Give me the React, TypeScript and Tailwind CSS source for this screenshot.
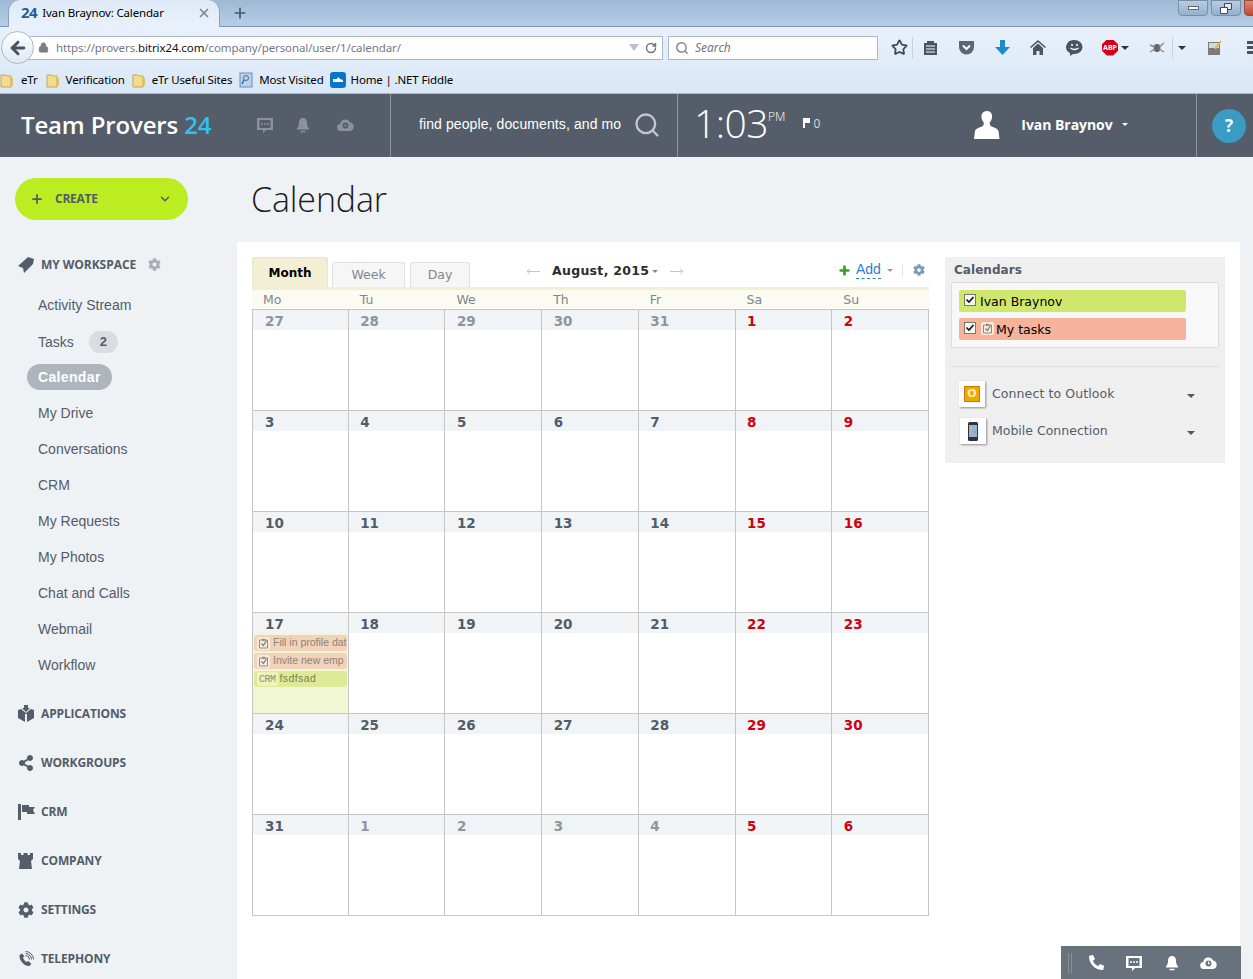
import React from 'react';
import { Search, RotateCw, Star, ArrowLeft, Lock, Plus, X, ChevronDown } from 'lucide-react';
import { FaCog, FaShareAlt, FaPhoneAlt } from 'react-icons/fa';

const sans = "font-['Liberation_Sans',Arial,sans-serif]";

const Folder = () => (
  <svg width="14" height="16" viewBox="0 0 14 16" className="shrink-0">
    <path d="M1 3h5l1 1h4v11H1z" fill="#f4dc8c" stroke="#c5a850" />
    <path d="M11 6h2v7l-2 2z" fill="#dcc070" />
  </svg>
);

const Chat = ({ c = '#8b929b', s = 18 }: { c?: string; s?: number }) => (
  <svg width={s} height={s} viewBox="0 0 18 18">
    <path d="M1 2h16v12h-7l-3 3v-3H1z" fill={c} />
    <path d="M3.500 4h11v8h-11z" fill={c === '#fff' ? '#68727d' : '#545d69'} />
    <circle cx="6" cy="8" r="1" fill={c} />
    <circle cx="9" cy="8" r="1" fill={c} />
    <circle cx="12" cy="8" r="1" fill={c} />
  </svg>
);

const BellIcon = ({ c = '#8b929b', s = 16 }: { c?: string; s?: number }) => (
  <svg width={s} height={s} viewBox="0 0 16 16">
    <path d="M8 1c-3 0-4 2.500-4 5 0 3-1 4-2 5.500v1h12v-1C13 10 12 9 12 6c0-2.500-1-5-4-5z" fill={c} />
    <rect x="5.500" y="13.800" width="5" height="1.500" fill={c} />
  </svg>
);

const Cloud = ({ c = '#8b929b', d = '#545d69', clock = false }: { c?: string; d?: string; clock?: boolean }) => (
  <svg width="17" height="13" viewBox="0 0 17 13">
    <path d="M4 13a3.500 3.500 0 0 1-.6-7A5 5 0 0 1 13 4.500 4.300 4.300 0 0 1 13 13z" fill={c} />
    <circle cx="8.500" cy="7.500" r="3" fill={d} />
    {clock ? <path d="M8.500 5.500v2.300h1.600" stroke={c} fill="none" /> : <circle cx="8.500" cy="7.500" r="1" fill={c} />}
  </svg>
);

function Browser() {
  return (
    <div className={`h-[94px] font-['Noto_Sans',sans-serif] text-black`}>
      <div className="h-[27px] flex items-start justify-between border-b border-[#7e9ab6] bg-gradient-to-b from-[#9fb9d5] to-[#b5cde6]">
        <div className="flex items-center">
          <div className="ml-2 w-[212px] h-[27px] -mb-px rounded-t-xl bg-gradient-to-b from-[#dfeaf6] to-[#e9f1fb] flex items-center pl-3 pr-2 pb-[2px] border-x border-[#8aa3bc]">
            <span className="text-[15px] font-bold text-[#215f96] tracking-[-0.5px]">24</span>
            <span className="ml-[5px] text-[11.500px] tracking-[-0.15px]">Ivan Braynov: Calendar</span>
            <X className="ml-auto w-3.5 h-3.5 text-[#7d8994]" strokeWidth={3} />
          </div>
          <Plus className="ml-[12px] w-4 h-4 text-[#4a5561]" strokeWidth={2.500} />
        </div>
        <div className="flex gap-[3px] -mr-[21px]">
          <div className="w-[30px] h-[16px] rounded-b border border-[#7a8da3] bg-gradient-to-b from-[#b9cde2] to-[#94b0cd] flex items-center justify-center">
            <div className="w-[11px] h-[4px] bg-white border border-[#5a6a7a]" />
          </div>
          <div className="w-[30px] h-[16px] rounded-b border border-[#7a8da3] bg-gradient-to-b from-[#b9cde2] to-[#94b0cd] flex items-center justify-center">
            <svg width="12" height="11" viewBox="0 0 12 11">
              <path d="M4.500 .500h7v6h-7z" fill="#dfe8f1" stroke="#3a4a5a" />
              <path d="M.500 4.500h7v6h-7z" fill="#fff" stroke="#3a4a5a" />
            </svg>
          </div>
          <div className="w-[30px] h-[16px] rounded-b border border-[#9a4a3a] bg-gradient-to-b from-[#d98a78] to-[#c0452f]" />
        </div>
      </div>
      <div className="h-[67px] bg-gradient-to-b from-[#e9f1fb] to-[#d9e7f6] border-b border-[#a9b7c4]">
        <div className="h-[41px] flex items-center relative">
          <div className="absolute left-[1px] top-[4px] w-[33px] h-[33px] rounded-full bg-gradient-to-b from-white to-[#dfe7ef] border border-[#a9b8c6] flex items-center justify-center z-10">
            <ArrowLeft className="w-5 h-5 text-[#47525d]" strokeWidth={3.500} />
          </div>
          <div className="ml-[25px] w-[638px] h-[24px] bg-white border border-[#a9b9c9] flex items-center pl-[12px] pr-[5px]">
            <Lock className="w-[11px] h-[11px] text-[#7d7d7d] fill-[#7d7d7d]" />
            <span className="ml-[7px] text-[11.500px] text-[#6f7a84] tracking-[-0.1px]">
              https://provers.<span className="text-[#111]">bitrix24.com</span>/company/personal/user/1/calendar/
            </span>
            <span className="ml-auto w-0 h-0 border-x-[5px] border-x-transparent border-t-[7px] border-t-[#b8c2cb]" />
            <RotateCw className="ml-[6px] w-[12px] h-[12px] text-[#6c7780]" strokeWidth={3} />
          </div>
          <div className="ml-[5px] w-[210px] h-[24px] bg-white border border-[#a9b9c9] flex items-center pl-[6px]">
            <Search className="w-[14px] h-[14px] text-[#7c8790]" strokeWidth={2.500} />
            <span className="ml-[6px] text-[12px] italic text-[#777]">Search</span>
          </div>
          <div className="ml-[12px] w-[18px] flex justify-center">
            <Star className="w-[17px] h-[17px] text-[#3c4a57]" strokeWidth={2.500} />
          </div>
          <div className="ml-[4px] mr-[1px] w-px h-[22px] bg-[#c5d3e0]" />
          <div className="ml-[7px] w-[18px] flex justify-center">
            <svg width="15" height="16" viewBox="0 0 15 16">
              <path d="M1 3h3V1h7v2h3v12H1z" fill="#4a5561" />
              <path d="M3 6h9M3 9h9M3 12h9" stroke="#fff" />
            </svg>
          </div>
          <div className="ml-[18px] w-[18px] flex justify-center">
            <svg width="17" height="15" viewBox="0 0 17 15">
              <path d="M1 1h15v6a7.500 7.500 0 0 1-15 0z" fill="#5a6672" />
              <path d="M5 5.500l3.500 3.500L12 5.500" stroke="#fff" strokeWidth="2" fill="none" />
            </svg>
          </div>
          <div className="ml-[18px] w-[18px] flex justify-center">
            <svg width="15" height="15" viewBox="0 0 15 15">
              <path d="M5 0h5v7h5l-7.500 8L0 7h5z" fill="#1a8ccb" />
            </svg>
          </div>
          <div className="ml-[18px] w-[18px] flex justify-center">
            <svg width="16" height="15" viewBox="0 0 16 15">
              <path d="M8 0L0 7l1 1 7-6 7 6 1-1z" fill="#4a5561" />
              <path d="M3 8l5-4.500L13 8v7H9.500v-4h-3v4H3z" fill="#4a5561" />
            </svg>
          </div>
          <div className="ml-[18px] w-[18px] flex justify-center">
            <svg width="17" height="16" viewBox="0 0 17 16">
              <path d="M8.500 0a8 7 0 0 1 0 14H7l-3 2v-3A8 7 0 0 1 8.500 0z" fill="#4a5561" />
              <circle cx="6" cy="5" r="1" fill="#fff" />
              <circle cx="11" cy="5" r="1" fill="#fff" />
              <path d="M4.500 8q4 3 8 0" stroke="#fff" strokeWidth="1.300" fill="none" />
            </svg>
          </div>
          <div className="ml-[19px] flex items-center">
            <span className="w-[16px] h-[16px] [clip-path:polygon(30%_0,70%_0,100%_30%,100%_70%,70%_100%,30%_100%,0_70%,0_30%)] bg-[#d3001a] text-white text-[7px] font-bold leading-[16px] text-center">ABP</span>
            <span className="ml-[3px] w-0 h-0 border-x-[4px] border-x-transparent border-t-[4px] border-t-[#333]" />
          </div>
          <div className="ml-[19px] w-[18px] flex justify-center">
            <svg width="16" height="14" viewBox="0 0 16 14">
              <ellipse cx="8" cy="7" rx="3.500" ry="4" fill="#666" />
              <path d="M1 4l5 2M15 2l-5 4M1 11l5-3M15 11l-5-3" stroke="#888" strokeWidth="1.400" />
            </svg>
          </div>
          <div className="ml-[6px] w-px h-[22px] bg-[#c5d3e0]" />
          <span className="ml-[5px] w-0 h-0 border-x-[4px] border-x-transparent border-t-[4px] border-t-[#333]" />
          <div className="ml-[19px] w-[18px] flex justify-center">
            <svg width="15" height="16" viewBox="0 0 15 16">
              <rect x="1" y="2" width="12" height="13" fill="#7b7b7b" />
              <rect x="2" y="3" width="10" height="5" fill="#d8d8d8" />
              <path d="M8 9l6-8" stroke="#e6b93a" strokeWidth="2" />
            </svg>
          </div>
          <div className="ml-[24px] flex flex-col gap-[2px]">
            <div className="w-[6px] h-[3px] bg-[#47525d]" />
            <div className="w-[6px] h-[3px] bg-[#47525d]" />
            <div className="w-[6px] h-[3px] bg-[#47525d]" />
          </div>
        </div>
        <div className="flex items-center h-[24px] text-[11.500px] tracking-[-0.15px]">
          <div className="flex items-center gap-[7px]"><Folder /><span>eTr</span></div>
          <div className="ml-[8px] flex items-center gap-[6px]"><Folder /><span>Verification</span></div>
          <div className="ml-[7px] flex items-center gap-[6px]"><Folder /><span>eTr Useful Sites</span></div>
          <div className="ml-[7px] flex items-center gap-[6px]">
            <svg width="14" height="16" viewBox="0 0 14 16">
              <rect x="1" y="1" width="12" height="14" fill="#bcd2ea" stroke="#6b8fb5" />
              <circle cx="7" cy="6" r="2.500" fill="none" stroke="#3a6ea5" />
              <path d="M5 8l-2 4" stroke="#3a6ea5" strokeWidth="1.500" />
            </svg>
            <span>Most Visited</span>
          </div>
          <div className="ml-[6px] flex items-center gap-[5px]">
            <span className="w-[16px] h-[16px] rounded-[3px] bg-[#0a74c9] flex items-center justify-center">
              <svg width="12" height="8" viewBox="0 0 12 8"><path d="M1 6h10V4L8 3 6 1 5 3H1z" fill="#fff" /></svg>
            </span>
            <span>Home | .NET Fiddle</span>
          </div>
        </div>
      </div>
    </div>
  );
}

function AppHeader() {
  return (
    <div className="h-[63px] bg-[#545d69] flex items-stretch text-white">
      <div className="w-[391px] flex items-center border-r border-[#8e959e] pl-[21px] pb-[2px]">
        <span className="w-[235px] font-['Open_Sans',sans-serif] font-semibold text-[24px] tracking-[-0.15px] whitespace-nowrap">
          Team Provers <span className="text-[#2fc1f0]">24</span>
        </span>
        <Chat />
        <span className="ml-[21px]"><BellIcon /></span>
        <span className="ml-[26px]"><Cloud /></span>
      </div>
      <div className="w-[287px] flex items-center border-r border-[#8e959e] pl-[28px] pb-[2px]">
        <span className={`${sans} text-[14px] tracking-[0.1px] w-[216px] overflow-hidden whitespace-nowrap`}>find people, documents, and mo</span>
        <Search className="-ml-[2px] w-[28px] h-[28px] text-[#c2c7cc]" strokeWidth={2} />
      </div>
      <div className="w-[519px] flex items-center border-r border-[#8e959e] pl-[16px] pb-[2px] font-['Open_Sans',sans-serif]">
        <span className="mb-[4px] text-[39px] font-light leading-none tracking-[-0.5px]">1:03</span>
        <span className="self-start mt-[14px] text-[12px] font-light">PM</span>
        <svg className="ml-[18px] -mt-1" width="7" height="10" viewBox="0 0 7 10"><path d="M0 0h7v5H2v5H0z" fill="#fff" /></svg>
        <span className="ml-[3px] -mt-0.5 text-[12px] text-[#d8dbdf]">0</span>
        <svg className="ml-[154px]" width="26" height="32" viewBox="0 0 26 32">
          <path d="M13 2c4 0 5.500 3 5 6.500-.3 2.500-1.500 4-2.500 5.500l1 3c3 1.500 7 2 8 5l1 8H0l1-8c1-3 5-3.500 8-5l1-3C9 12.500 7.800 11 7.500 8.500 7 5 9 2 13 2z" fill="#fff" />
        </svg>
        <span className="ml-[21px] text-[14px] font-bold tracking-[-0.05px]">Ivan Braynov</span>
        <span className="ml-[9px] w-0 h-0 border-x-[3px] border-x-transparent border-t-[3px] border-t-white" />
      </div>
      <div className="flex-1 flex items-center pl-[15px]">
        <span className="w-[34px] h-[34px] shrink-0 rounded-full bg-[#3a9cc2] flex items-center justify-center font-['Open_Sans',sans-serif] font-bold text-[17px]">?</span>
      </div>
    </div>
  );
}

const sections = [
  {
    label: 'APPLICATIONS',
    icon: (
      <svg width="16" height="17" viewBox="0 0 16 17">
        <path d="M6 0h4v3h2L8 7 4 3h2z" fill="#545d69" />
        <path d="M0 5l3-1 5 4 5-4 3 1v8l-7 4V9L8 9 7 9v8l-7-4z" fill="#545d69" />
      </svg>
    ),
  },
  { label: 'WORKGROUPS', icon: <FaShareAlt className="w-[16px] h-[16px] text-[#545d69]" /> },
  {
    label: 'CRM',
    icon: (
      <svg width="17" height="16" viewBox="0 0 17 16">
        <path d="M0 0h3v16H0z" fill="#545d69" />
        <path d="M4 1h7v2h6l-2 3 2 4H9V8H4z" fill="#545d69" />
      </svg>
    ),
  },
  {
    label: 'COMPANY',
    icon: (
      <svg width="15" height="16" viewBox="0 0 15 16">
        <path d="M0 0h3v2h2.500V0h4v2H12V0h3v6l-2 2 1 8H1l1-8-2-2z" fill="#545d69" />
      </svg>
    ),
  },
  { label: 'SETTINGS', icon: <FaCog className="w-[16px] h-[16px] text-[#545d69]" /> },
  {
    label: 'TELEPHONY',
    icon: (
      <svg width="16" height="16" viewBox="0 0 16 16">
        <path d="M4 2.500L1.500 4C.800 9 6 15.500 11.500 15l1.800-2.300-3-2.700-1.800 1C6.800 10 5.500 8.300 5 6.500l1.500-1.300z" fill="#545d69" />
        <path d="M7.500 4.500a4 4 0 0 1 4 4M7.500 2.500a6 6 0 0 1 6 6M7.500 .500a8 8 0 0 1 8 8" stroke="#545d69" fill="none" />
      </svg>
    ),
  },
];

const links = ['Activity Stream', 'Tasks', 'Calendar', 'My Drive', 'Conversations', 'CRM', 'My Requests', 'My Photos', 'Chat and Calls', 'Webmail', 'Workflow'];

function AppSidebar() {
  return (
    <div className="w-[237px] shrink-0 pt-[21px]">
      <div className="ml-[15px] w-[173px] h-[42px] rounded-[21px] bg-[#bbed21] flex items-center pl-[15px] pr-[16px] text-[#535c69]">
        <Plus className="w-[14px] h-[14px]" strokeWidth={3} />
        <span className="ml-[11px] font-['Open_Sans',sans-serif] font-bold text-[12px] tracking-[-0.25px]">CREATE</span>
        <ChevronDown className="ml-auto w-[14px] h-[14px]" strokeWidth={2.500} />
      </div>
      <div className="mt-[26px]">
        <div className="h-[37px] flex items-center pl-[18px]">
          <span className="w-[23px] shrink-0">
            <svg width="17" height="17" viewBox="0 0 17 17">
              <path d="M0 10L10 1l6 2-1 5-9 9-1-5z" fill="#545d69" />
            </svg>
          </span>
          <span className="font-['Open_Sans',sans-serif] font-bold text-[12px] text-[#535c69] tracking-[-0.05px]">MY WORKSPACE</span>
          <FaCog className="ml-[12px] w-[13px] h-[13px] text-[#a9afb6]" />
        </div>
        <div className={`${sans} text-[14px] text-[#535c69] mt-[4px]`}>
          {links.map((l) => {
            if (l === 'Calendar') {
              return (
                <div key={l} className="h-[36px] flex items-center pl-[27px]">
                  <span className="h-[26px] px-[11px] rounded-[13px] bg-[#aeb5bc] text-white font-bold flex items-center tracking-[0.35px]">{l}</span>
                </div>
              );
            }
            return (
              <div key={l} className={`h-[36px] flex items-center pl-[38px] ${l === 'Tasks' ? 'pt-[2px]' : ''}`}>
                {l}
                {l === 'Tasks' && (
                  <span className="ml-[15px] w-[29px] h-[22px] rounded-[11px] bg-[#d9dde1] font-bold text-[13px] flex items-center justify-center">2</span>
                )}
              </div>
            );
          })}
        </div>
        <div className="mt-[6px]">
          {sections.map((s) => (
            <div key={s.label} className="h-[49px] flex items-center pl-[18px]">
              <span className="w-[23px] flex justify-start shrink-0">{s.icon}</span>
              <span className="font-['Open_Sans',sans-serif] font-bold text-[12px] text-[#535c69] tracking-[-0.15px]">{s.label}</span>
            </div>
          ))}
        </div>
      </div>
    </div>
  );
}

const days = [
  27, 28, 29, 30, 31, 1, 2,
  3, 4, 5, 6, 7, 8, 9,
  10, 11, 12, 13, 14, 15, 16,
  17, 18, 19, 20, 21, 22, 23,
  24, 25, 26, 27, 28, 29, 30,
  31, 1, 2, 3, 4, 5, 6,
];

const TaskIcon = () => (
  <span className="w-[13px] h-[13px] bg-[#f7e9dc] rounded-[2px] flex items-center justify-center shrink-0">
    <svg width="11" height="11" viewBox="0 0 11 11">
      <path d="M1.500 2h8v8h-8z" fill="none" stroke="#8d8d84" />
      <path d="M3.500 5.500l2 2 3-5" fill="none" stroke="#7d7d74" strokeWidth="1.200" />
      <path d="M4 .800h3v2H4z" fill="#8d8d84" />
    </svg>
  </span>
);

const Check = () => (
  <span className="w-[12px] h-[12px] mb-[2px] bg-[#f8f8f0] border border-[#777] flex items-center justify-center shrink-0">
    <svg width="10" height="10" viewBox="0 0 10 10">
      <path d="M1.500 4.500l2.500 2.500 4.500-5" fill="none" stroke="#111" strokeWidth="1.600" />
    </svg>
  </span>
);

function Event({ text, crm }: { text: string; crm?: boolean }) {
  return (
    <div className={`h-[16px] mb-[2px] mx-[1px] rounded-[3px] flex items-center whitespace-nowrap ${sans} text-[10.500px] ${crm ? 'bg-[#deeb96] text-[#7a7f57]' : 'bg-[#f2d2b8] text-[#8c8577]'}`}>
      {crm ? (
        <span className="ml-[3px] px-[2px] h-[14px] bg-[#ecf3bd] rounded-[2px] text-[10px] font-['Liberation_Mono',monospace] flex items-center tracking-[-0.5px] text-[#8f9468]">CRM</span>
      ) : (
        <span className="ml-[3px]"><TaskIcon /></span>
      )}
      <span className={crm ? 'ml-[2px] tracking-[0.4px]' : 'ml-[3px]'}>{text}</span>
    </div>
  );
}

function DayCell({ d, i }: { d: number; i: number }) {
  const muted = i < 5 || (i > 35 && i % 7 < 5);
  const weekend = i % 7 >= 5;
  const color = weekend ? 'text-[#d0000f]' : muted ? 'text-[#8f959b]' : 'text-[#535c69]';
  const today = i === 21;
  return (
    <div className={`h-[101px] border-r border-b border-[#c6c6c6] ${i % 7 === 0 ? 'border-l' : ''} ${today ? 'bg-[#f0f7d2]' : ''}`}>
      <div className={`h-[20px] bg-[#f0f4f7] ${i % 7 === 0 ? 'pl-[12px]' : 'pl-[11.500px]'} font-['DejaVu_Sans',sans-serif] font-bold text-[13.500px] leading-[23px] ${color}`}>{d}</div>
      {today && (
        <div className="pt-[2px]">
          <Event text="Fill in profile dat" />
          <Event text="Invite new emp" />
          <Event text="fsdfsad" crm />
        </div>
      )}
    </div>
  );
}

function CalendarGrid() {
  const vd = "font-['DejaVu_Sans',sans-serif]";
  return (
    <div className={`w-[677px] shrink-0 ${vd}`}>
      <div className="h-[30px] flex items-end relative">
        <div className="w-[76px] h-[30px] bg-[#f3efd4] rounded-t-[3px] border-t border-x border-[#e9e5c8] text-[12px] font-bold text-black flex items-center justify-center">Month</div>
        <div className="ml-[4px] w-[73px] h-[25px] bg-[#f6f6f6] rounded-t-[3px] border-t border-x border-[#e1e1e1] text-[12.500px] text-[#80868d] flex items-center justify-center">Week</div>
        <div className="ml-[5px] w-[60px] h-[25px] bg-[#f6f6f6] rounded-t-[3px] border-t border-x border-[#e1e1e1] text-[12.500px] text-[#80868d] flex items-center justify-center">Day</div>
        <div className="absolute left-[274px] top-[5px] flex items-center text-[#2d2d2d]">
          <svg className="mt-[1px]" width="14" height="7" viewBox="0 0 14 7"><path d="M14 3.500H1M4 .800L1 3.500l3 2.700" stroke="#c2c6ca" fill="none" /></svg>
          <span className="ml-[12px] text-[12.500px] font-bold tracking-[0.3px]">August, 2015</span>
          <span className="ml-[3px] w-0 h-0 border-x-[3px] border-x-transparent border-t-[3px] border-t-[#8a8a8a]" />
          <svg className="ml-[12px] mt-[1px]" width="14" height="7" viewBox="0 0 14 7"><path d="M0 3.500h13M10 .800l3 2.700-3 2.700" stroke="#c2c6ca" fill="none" /></svg>
        </div>
        <div className="absolute left-[586px] top-[4px] flex items-center">
          <span className="text-[#3aa01d]"><Plus className="w-[13px] h-[13px]" strokeWidth={5} /></span>
          <span className="ml-[5px] text-[14px] text-[#2a7fd5] leading-[17px] border-b border-dashed border-[#2a7fd5] font-['Liberation_Sans',sans-serif]">Add</span>
          <span className="ml-[6px] w-0 h-0 border-x-[3px] border-x-transparent border-t-[3px] border-t-[#9a9a9a]" />
          <span className="ml-[9px] w-px h-[12px] bg-[#e3e3e3]" />
          <FaCog className="ml-[10px] w-[12px] h-[12px] text-[#7d9ab5]" />
        </div>
      </div>
      <div className="border-t-[3px] border-[#f3efd4] h-[23px] bg-[#fbfbf2] border-b border-b-[#c6c6c6] grid grid-cols-7 text-[12.500px] text-[#80868d] leading-[20px]">
        {['Mo', 'Tu', 'We', 'Th', 'Fr', 'Sa', 'Su'].map((d) => (
          <div key={d} className="pl-[11px]">{d}</div>
        ))}
      </div>
      <div className="grid grid-cols-7">
        {days.map((d, i) => (
          <DayCell key={i} d={d} i={i} />
        ))}
      </div>
    </div>
  );
}

function Side() {
  return (
    <div className="ml-[16px] w-[280px] h-[206px] bg-[#efefef] font-['DejaVu_Sans',sans-serif] px-[6px] pt-[5px]">
      <div className="pl-[3px] h-[19px] text-[12px] font-bold tracking-[0.05px] text-[#535c69] leading-[16px]">Calendars</div>
      <div className="mt-[1px] h-[66px] bg-[#f8f8f8] border border-[#dddddd] rounded-[2px] pl-[7px] pt-[7px]">
        <div className="w-[227px] h-[22px] bg-[#d0e76d] rounded-[2px] flex items-center pl-[5px] text-[12.500px] text-black">
          <Check />
          <span className="ml-[4px] mt-[2px]">Ivan Braynov</span>
        </div>
        <div className="mt-[6px] w-[227px] h-[22px] bg-[#f5b39b] rounded-[2px] flex items-center pl-[5px] text-[12.500px] text-black">
          <Check />
          <span className="ml-[5px] mb-[2px]"><TaskIcon /></span>
          <span className="ml-[2px] mt-[2px]">My tasks</span>
        </div>
      </div>
      <div className="mt-[18px] border-t border-[#dddddd]" />
      <div className="mt-[14px] pl-[8px] h-[26px] flex items-center text-[12.500px] text-[#535c69] tracking-[0.1px]">
        <span className="w-[26px] h-[26px] bg-white shadow-[1px_1px_2px_rgba(0,0,0,0.4)] flex items-center justify-center">
          <span className="w-[16px] h-[16px] bg-[#f0a800] border border-[#c87a00] text-[#fff2c0] text-[11px] font-bold flex items-center justify-center">O</span>
        </span>
        <span className="ml-[7px]">Connect to Outlook</span>
        <span className="ml-auto mr-[24px] mt-1 w-0 h-0 border-x-[4px] border-x-transparent border-t-[4px] border-t-[#555]" />
      </div>
      <div className="mt-[11px] pl-[9px] h-[26px] flex items-center text-[12.500px] text-[#535c69]">
        <span className="w-[26px] h-[26px] bg-white shadow-[1px_1px_2px_rgba(0,0,0,0.4)] flex items-center justify-center">
          <svg width="10" height="19" viewBox="0 0 10 19">
            <rect width="10" height="19" rx="1.500" fill="#333" />
            <rect x="1" y="3" width="8" height="12" fill="#8fb6d8" />
            <rect x="2" y="5" width="2" height="2" fill="#e8c14a" />
            <rect x="6" y="9" width="2" height="2" fill="#d77bb0" />
          </svg>
        </span>
        <span className="ml-[6px]">Mobile Connection</span>
        <span className="ml-auto mr-[24px] mt-1 w-0 h-0 border-x-[4px] border-x-transparent border-t-[4px] border-t-[#555]" />
      </div>
    </div>
  );
}

export default function App() {
  return (
    <div className="relative w-[1253px] h-[979px] overflow-hidden bg-[#eef2f5]">
      <Browser />
      <AppHeader />
      <div className="flex">
        <AppSidebar />
        <div className="w-[1003px]">
          <div className="h-[85px] pl-[14px] pt-[17px] font-['Open_Sans',sans-serif] font-light text-[34px] leading-[50px] text-[#1c1c1c] tracking-[-0.15px]">Calendar</div>
          <div className="bg-white h-[737px] pl-[15px] pt-[15px] flex items-start">
            <CalendarGrid />
            <Side />
          </div>
        </div>
      </div>
      <div className="absolute left-[1061px] top-[946px] w-[180px] h-[33px] bg-[#68727d] flex items-center pl-[7px]">
        <span className="w-[4px] h-[20px] border-x border-[#868f98]" />
        <FaPhoneAlt className="ml-[17px] w-[15px] h-[15px] text-white" />
        <span className="ml-[21px]"><Chat c="#fff" /></span>
        <span className="ml-[21px]"><BellIcon c="#fff" /></span>
        <span className="ml-[20px]"><Cloud c="#fff" d="#68727d" clock /></span>
      </div>
    </div>
  );
}
